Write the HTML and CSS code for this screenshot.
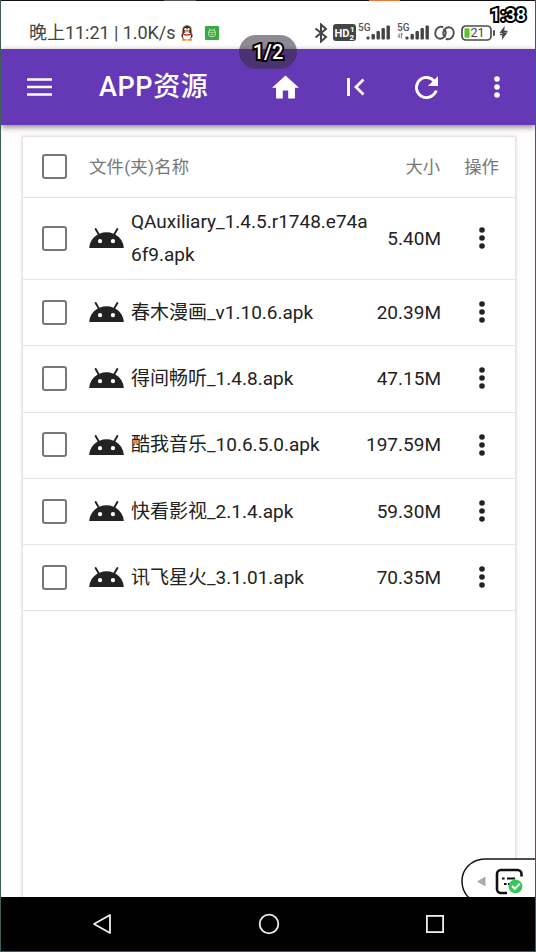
FILE: index.html
```
<!DOCTYPE html>
<html lang="zh-CN">
<head>
<meta charset="utf-8">
<title>APP资源</title>
<link rel="stylesheet" href="styles.css">
</head>
<body>
<svg class="defs" aria-hidden="true">
  <symbol id="android" viewBox="1 5.3 22 12.7"><path d="M17.6 9.48l1.84-3.18c.16-.31.04-.69-.26-.85a.63.63 0 0 0-.83.22l-1.88 3.24a11.43 11.43 0 0 0-8.94 0L5.65 5.67a.64.64 0 0 0-.87-.2c-.28.18-.37.54-.22.83L6.4 9.48A10.78 10.78 0 0 0 1 18h22a10.78 10.78 0 0 0-5.4-8.52zM7.9 15.05a1.35 1.35 0 1 1 0-2.7 1.35 1.35 0 0 1 0 2.7zm8.2 0a1.35 1.35 0 1 1 0-2.7 1.35 1.35 0 0 1 0 2.7z"/></symbol>
  <symbol id="more" viewBox="0 0 6 22"><circle cx="3" cy="3" r="2.8"/><circle cx="3" cy="11" r="2.8"/><circle cx="3" cy="19" r="2.8"/></symbol>
</svg>
<div class="phone">
  <div class="edge"><i class="edge-grey"></i><i class="edge-orange"></i></div>
  <header class="status">
    <span class="status-text">晚上11:21 | 1.0K/s</span>
    <svg class="penguin" width="14" height="16" viewBox="0 0 14 16"><ellipse cx="7" cy="6" rx="4.6" ry="5.6" fill="#332b2b"/><ellipse cx="7" cy="10.5" rx="5.6" ry="4.6" fill="#3b3030"/><ellipse cx="7" cy="11" rx="4" ry="4" fill="#fff"/><path d="M2.5 2.8Q7-1.5 11.5 2.8" fill="none" stroke="#8c6a35" stroke-width="1"/><circle cx="5.5" cy="4.2" r="1.2" fill="#fff"/><circle cx="8.5" cy="4.2" r="1.2" fill="#fff"/><ellipse cx="7" cy="6.3" rx="2.7" ry="1" fill="#f7a721"/><path d="M2 7.8Q7 10.5 12 7.8v1.8Q7 12 2 9.6z" fill="#dc3434"/><path d="M2 14.8h4.5M7.5 14.8H12" stroke="#ed9a25" stroke-width="1.8"/></svg>
    <svg class="greenapp" width="14" height="14" viewBox="0 0 14 14"><rect width="14" height="14" rx="1" fill="#39aa40"/><rect x="3.5" y="4" width="7" height="6.5" rx="2.5" fill="none" stroke="#bce4b8"/><path d="M4 2.6l1 1.4M10 2.6L9 4M4 6.3h6M5.3 8.3h3.4" stroke="#bce4b8" stroke-width=".9"/></svg>
    <span class="spacer"></span>
    <svg class="bt" width="14" height="20" viewBox="0 0 14 20"><path d="M1.5 5.5L12 14l-5 4.5v-17L12 6 1.5 14.5" fill="none" stroke="#444" stroke-width="2"/></svg>
    <svg class="hd" width="23" height="17" viewBox="0 0 23 17"><rect width="23" height="17" rx="3" fill="#454545"/><text x="1.5" y="12.6" class="hd-text">HD</text><text x="17" y="7.8" class="hd-num">1</text><text x="16.5" y="16" class="hd-num">2</text></svg>
    <svg class="sig" width="33" height="19" viewBox="0 0 33 19"><text x="0" y="8" class="five">5G</text><g fill="#444"><rect x="8.5" y="13.5" width="3" height="3" rx="1"/><rect x="13.5" y="11" width="3.4" height="5.5" rx="1"/><rect x="18.5" y="8" width="3.4" height="8.5" rx="1"/><rect x="23.5" y="5" width="3.4" height="11.5" rx="1"/><rect x="28.5" y="2.5" width="3.4" height="14" rx="1"/></g></svg>
    <svg class="sig2" width="33" height="19" viewBox="0 0 33 19"><text x="0" y="8" class="five">5G</text><path d="M2.2 10.5v4M4.3 10v5.5M.8 12.8l1.4 1.8M4.3 10l1.5 1.8" stroke="#777" stroke-width="1" fill="none"/><g fill="#444"><rect x="8.5" y="13.5" width="3" height="3" rx="1"/><rect x="13.5" y="11" width="3.4" height="5.5" rx="1"/><rect x="18.5" y="8" width="3.4" height="8.5" rx="1"/><rect x="23.5" y="5" width="3.4" height="11.5" rx="1"/><rect x="28.5" y="2.5" width="3.4" height="14" rx="1"/></g></svg>
    <svg class="link" width="21" height="16" viewBox="0 0 21 16"><path d="M8.5 2C4.500 1 1.200 4.200 1.200 8.200c0 3.600 2.500 5.800 5.300 5.600C9.600 13.500 11.800 10.500 11.800 7.500 11.800 6 11.200 5 10 4.600M12.500 14c4 1 7.300-2.200 7.300-6.200 0-3.600-2.500-5.800-5.300-5.600C11.400 2.500 9.200 5.500 9.200 8.500c0 1.500.6 2.500 1.800 2.900" fill="none" stroke="#505050" stroke-width="1.900" stroke-linecap="round"/></svg>
    <svg class="battery" width="35" height="16" viewBox="0 0 35 16"><rect x="1" y="1" width="29" height="14" rx="3.8" fill="#fff" stroke="#4b4b4b" stroke-width="1.7"/><rect x="3.5" y="3.3" width="5" height="9.4" rx="1" fill="#5cc422"/><text x="9.5" y="12.3" class="pct">21</text><rect x="32" y="5" width="2" height="6" rx="1" fill="#555"/></svg>
    <svg class="bolt" width="9" height="14" viewBox="0 0 9 14"><path d="M5.6 0L.5 7h3L2.8 14 8.5 6.600H5.3z" fill="#444"/><path d="M1 8.600h4M4 5.400h4.500" stroke="#444" stroke-width="1.5"/></svg>
  </header>
  <nav class="appbar">
    <svg class="menu" width="25" height="18" viewBox="0 0 25 18"><path d="M0 1.5h25M0 9h25M0 16.5h25" stroke="#fff" stroke-width="2.6"/></svg>
    <h1 class="title">APP资源</h1>
    <svg class="home" width="27" height="24" viewBox="2 3 20 17"><path d="M10 20v-6h4v6h5v-8h3L12 3 2 12h3v8z" fill="#fff"/></svg>
    <svg class="first" width="18" height="18" viewBox="0 0 18 18"><path d="M1.5 0v18M16.5 1.5L9 9l7.5 7.5" fill="none" stroke="#fff" stroke-width="2.8"/></svg>
    <svg class="refresh" width="23" height="23" viewBox="4 4 16 16"><path d="M17.650 6.350A8 8 0 1 0 19.730 14h-2.080A6 6 0 1 1 12 6c1.660 0 3.140.69 4.220 1.780L13 11h7V4z" fill="#fff"/></svg>
    <svg class="barmore" width="6" height="22"><use href="#more"/></svg>
  </nav>
  <main class="page">
    <section class="card">
      <div class="row head"><i class="check"></i><span class="label">文件(夹)名称</span><span class="size">大小</span><span class="op">操作</span></div>
      <div class="row tall"><i class="check"></i><svg class="android"><use href="#android"/></svg><span class="name">QAuxiliary_1.4.5.r1748.e74a6f9.apk</span><span class="size">5.40M</span><svg class="more"><use href="#more"/></svg></div>
      <div class="row"><i class="check"></i><svg class="android"><use href="#android"/></svg><span class="name">春木漫画_v1.10.6.apk</span><span class="size">20.39M</span><svg class="more"><use href="#more"/></svg></div>
      <div class="row"><i class="check"></i><svg class="android"><use href="#android"/></svg><span class="name">得间畅听_1.4.8.apk</span><span class="size">47.15M</span><svg class="more"><use href="#more"/></svg></div>
      <div class="row"><i class="check"></i><svg class="android"><use href="#android"/></svg><span class="name">酷我音乐_10.6.5.0.apk</span><span class="size">197.59M</span><svg class="more"><use href="#more"/></svg></div>
      <div class="row"><i class="check"></i><svg class="android"><use href="#android"/></svg><span class="name">快看影视_2.1.4.apk</span><span class="size">59.30M</span><svg class="more"><use href="#more"/></svg></div>
      <div class="row"><i class="check"></i><svg class="android"><use href="#android"/></svg><span class="name">讯飞星火_3.1.01.apk</span><span class="size">70.35M</span><svg class="more"><use href="#more"/></svg></div>
    </section>
    <div class="float">
      <svg width="74" height="39" viewBox="0 0 74 39"><path d="M76 .9H24C10 .9 1 12 1 23c0 7 3 13 7 17h68z" fill="#fff" stroke="#151515" stroke-width="1.5"/><path d="M24.5 18.500v10l-8.500-5z" fill="#aaa"/><path d="M60.500 18.500V16a4 4 0 0 0-4-4H40a4 4 0 0 0-4 4v15a4 4 0 0 0 4 4h6" fill="none" stroke="#111" stroke-width="2.6"/><path d="M41 20.500h2.600M46 20.500h8M43 26h2.600M47 26h4" stroke="#111" stroke-width="2.2"/><circle cx="54.500" cy="28.300" r="6.900" fill="#34c759"/><path d="M51 28l2.800 2.800 5-5" fill="none" stroke="#fff" stroke-width="2"/></svg>
    </div>
  </main>
  <footer class="navbar">
    <svg width="20" height="22" viewBox="0 0 20 22"><path d="M18 2v18L2 11z" fill="none" stroke="#eee" stroke-width="1.8" stroke-linejoin="round"/></svg>
    <svg width="22" height="22" viewBox="0 0 22 22"><circle cx="11" cy="11" r="9.300" fill="none" stroke="#eee" stroke-width="1.8"/></svg>
    <svg width="20" height="20" viewBox="0 0 20 20"><rect x="1.900" y="1.900" width="16.200" height="16.200" fill="none" stroke="#eee" stroke-width="1.8"/></svg>
  </footer>
  <div class="counter">1/2</div>
  <div class="clock">1:38</div>
</div>
</body>
</html>
```
FILE: styles.css
```
* { box-sizing: border-box; }
body { margin: 0; background: #fff; font-family: Roboto, "Noto Sans CJK SC", sans-serif; }
svg { display: block; flex: none; }
.defs { position: absolute; width: 0; height: 0; }
.phone { position: relative; width: 536px; height: 952px; overflow: hidden; display: flex; flex-direction: column; border: solid #405c57; border-width: 0 1px 1px; }
.edge { display: flex; height: 1px; background: #111; flex: none; }
.edge-grey { width: 32px; margin-left: 163px; background: #555; }
.edge-orange { width: 31px; margin-left: 173px; background: #e9793a; }
.status { display: flex; align-items: center; height: 48px; padding: 15px 27px 0 28px; flex: none; color: #444; }
.status-text { font-size: 18px; line-height: 24px; width: 150px; white-space: nowrap; letter-spacing: -.04px; }
.penguin { margin-left: 1px; }
.greenapp { margin-left: 11px; }
.spacer { flex: 1; }
.hd { margin-left: 5px; }
.sig { margin-left: 2px; }
.sig2 { margin-left: 6px; }
.link { margin-left: 4px; }
.battery { margin-left: 6px; }
.bolt { margin-left: 3px; }
.hd-text { font: 700 11px Roboto, sans-serif; fill: #fff; }
.hd-num { font: 700 8px Roboto, sans-serif; fill: #fff; }
.five { font: 500 10px Roboto, sans-serif; fill: #555; }
.pct { font: 12.5px Roboto, sans-serif; fill: #444; }
.appbar { position: relative; z-index: 1; display: flex; align-items: center; height: 76px; padding: 0 34px 0 26px; flex: none; background: #6539b5; color: #fff; box-shadow: 0 2px 6px rgba(0,0,0,.5); }
.title { margin: 0 0 1px 47px; width: 173px; font-size: 27px; line-height: 36px; font-weight: 500; letter-spacing: .6px; white-space: nowrap; }
.first { margin-left: 48px; }
.refresh { margin-left: 50px; }
.barmore { margin-left: 56px; fill: #fff; }
.page { position: relative; display: flex; flex: 1; min-height: 0; padding: 11px 19px 0 21px; background: #fffdfe; overflow: hidden; }
.card { flex: 1; min-width: 0; height: 800px; border: 1px solid #e6e3e4; border-width: 1px 1px 0; background: #fff; box-shadow: 0 0 3px rgba(0,0,0,.16); }
.row { display: flex; align-items: center; height: 66.3px; padding: 0 30px 1px 19px; border-bottom: 1px solid #e4e4e4; color: #222; font-size: 19px; }
.head { height: 61px; padding-right: 16px; color: #777; font-size: 17.4px; }
.tall { height: 82px; }
.check { width: 25px; height: 25px; border: 2px solid #777; border-radius: 3px; flex: none; }
.label { margin-left: 22px; flex: 1; letter-spacing: .2px; }
.head span { padding-bottom: 3px; }
.op { margin-left: 24px; }
.android { width: 35px; height: 20px; margin-left: 22px; fill: #222; }
.name { flex: 0 0 239px; margin-left: 7px; line-height: 33px; word-break: break-all; }
.size { margin-left: auto; white-space: nowrap; }
.name + .size { flex: 0 0 76px; margin-left: -5px; text-align: right; }
.more { width: 6px; height: 22px; margin-left: auto; fill: #222; }
.float { position: absolute; right: 0; bottom: 0; }
.navbar { display: flex; align-items: center; justify-content: space-between; height: 54px; padding: 0 90px 0 91px; flex: none; background: #000; }
.counter { position: absolute; z-index: 3; left: 238px; top: 35px; width: 58px; height: 34px; border-radius: 17px; background: rgba(55,45,65,.56); text-align: center; }
.counter, .clock { color: #fff; font: 500 20px/34px Roboto, sans-serif; -webkit-text-stroke: 4px #000; paint-order: stroke fill; }
.clock { position: absolute; z-index: 3; right: 9px; top: 5px; font-size: 18px; line-height: 20px; }
```
